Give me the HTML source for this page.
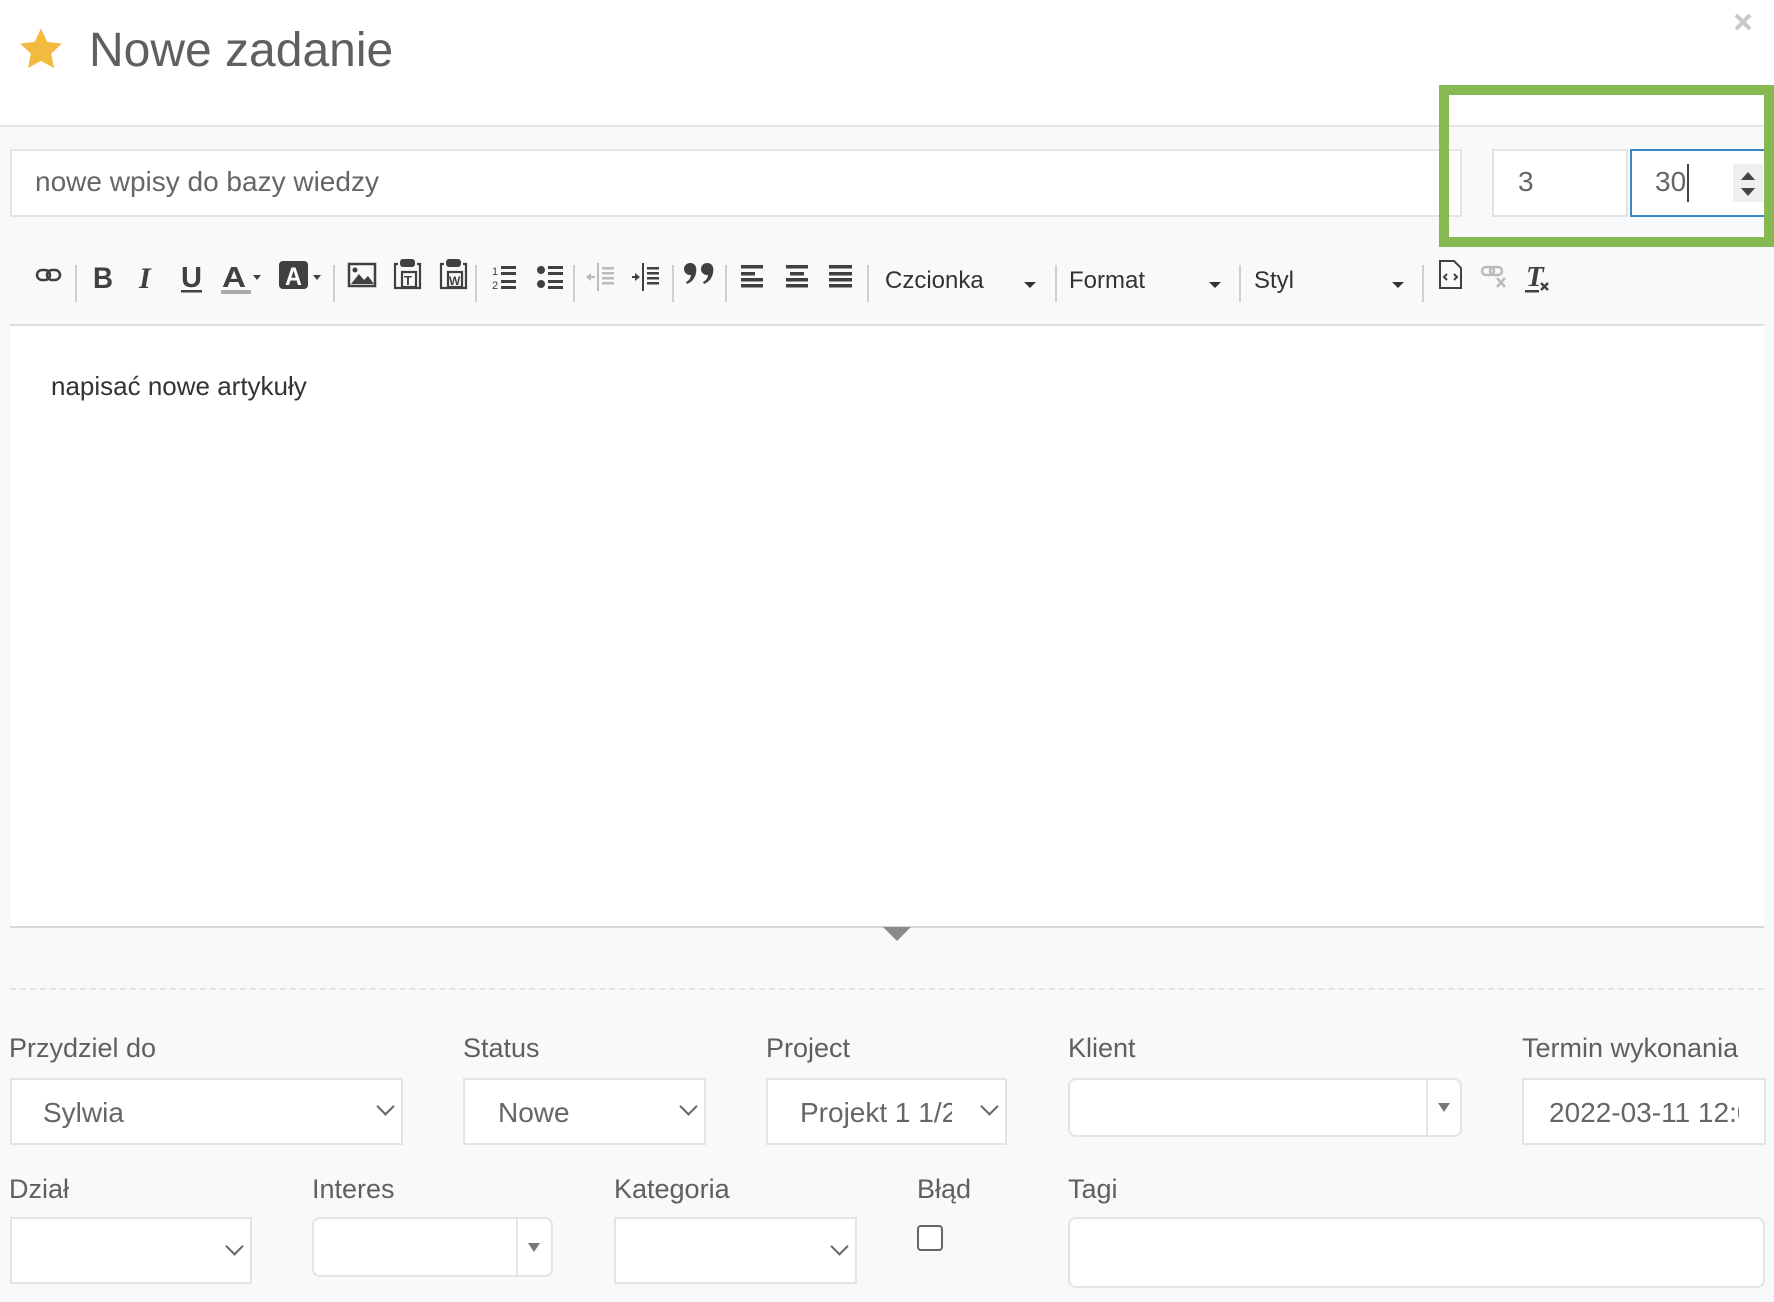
<!DOCTYPE html>
<html><head><meta charset="utf-8">
<style>
*{box-sizing:border-box;margin:0;padding:0}
body{width:1774px;height:1302px;position:relative;overflow:hidden;background:#f8f9fb;font-family:"Liberation Sans",sans-serif;color:#5f5f5f}
.a{position:absolute}
.box{position:absolute;background:#fff;border:2px solid #e3e4e6}
.lbl{position:absolute;font-size:27px;color:#5f5f5f;white-space:nowrap}
.txt{position:absolute;font-size:28px;color:#666;white-space:nowrap;overflow:hidden}
.sep{position:absolute;top:265px;width:2px;height:37px;background:#cfcfcf}
.chev{position:absolute;width:13px;height:13px;border-right:2px solid #666;border-bottom:2px solid #666;transform:rotate(45deg)}
.tb{position:absolute;font-size:24px;color:#333;white-space:nowrap}
.dd{position:absolute;width:0;height:0;border-left:6px solid transparent;border-right:6px solid transparent;border-top:6px solid #333}
</style></head><body>
<!-- header -->
<div class="a" style="left:0;top:0;width:1774px;height:127px;background:#fff;border-bottom:2px solid #e3e4e6"></div>
<svg class="a" style="left:18px;top:27px" width="46" height="44" viewBox="0 0 24 23"><path d="M12 0.8l3.3 7 7.6.9-5.6 5.2 1.5 7.6L12 17.7l-6.8 3.8 1.5-7.6L1.1 8.7l7.6-.9z" fill="#f2bb3f"/></svg>
<div class="a" style="left:89px;top:23px;font-size:48px;color:#5f5f5f;white-space:nowrap">Nowe zadanie</div>
<svg class="a" style="left:1733px;top:12px" width="20" height="20" viewBox="0 0 20 20"><path d="M3 3L17 17M17 3L3 17" stroke="#c8c8c8" stroke-width="4"/></svg>

<!-- title input -->
<div class="box" style="left:10px;top:149px;width:1452px;height:68px"></div>
<div class="txt" style="left:35px;top:166px">nowe wpisy do bazy wiedzy</div>
<div class="box" style="left:1492px;top:149px;width:136px;height:68px"></div>
<div class="txt" style="left:1518px;top:166px">3</div>
<div class="box" style="left:1630px;top:149px;width:136px;height:68px;border-color:#3b87c4"></div>
<div class="txt" style="left:1655px;top:166px">30</div>
<div class="a" style="left:1687px;top:164px;width:2px;height:38px;background:#444"></div>
<div class="a" style="left:1733px;top:164px;width:30px;height:38px;background:#efefef"></div>
<div class="a" style="left:1741px;top:172px;border-left:7px solid transparent;border-right:7px solid transparent;border-bottom:8px solid #444"></div>
<div class="a" style="left:1741px;top:188px;border-left:7px solid transparent;border-right:7px solid transparent;border-top:8px solid #444"></div>
<!-- green box -->
<div class="a" style="left:1439px;top:85px;width:335px;height:162px;border:10px solid #87b953"></div>

<!-- toolbar -->
<svg class="a" style="left:0;top:255px" width="1774" height="50" viewBox="0 0 1774 50" fill="#404040">
 <g fill="none" stroke="#404040" stroke-width="2.5"><rect x="37" y="15" width="13" height="10" rx="5"/><rect x="47" y="15" width="13" height="10" rx="5"/></g>
 <text x="93" y="33" font-size="30" font-weight="bold" font-family="Liberation Sans" textLength="20" lengthAdjust="spacingAndGlyphs">B</text>
 <text x="139" y="33" font-size="30" font-style="italic" font-weight="bold" font-family="Liberation Serif">I</text>
 <text x="181" y="32" font-size="29" font-weight="bold" font-family="Liberation Sans" textLength="21" lengthAdjust="spacingAndGlyphs">U</text>
 <rect x="181" y="35" width="21" height="2.5"/>
 <text x="222" y="32" font-size="29" font-weight="bold" font-family="Liberation Sans" textLength="24" lengthAdjust="spacingAndGlyphs">A</text>
 <rect x="221" y="35" width="30" height="4" fill="#aaa"/>
 <path d="M253 20h8l-4 5z"/>
 <rect x="279" y="6" width="29" height="28" rx="4"/>
 <text x="285" y="30" font-size="25" font-weight="bold" fill="#fff" font-family="Liberation Sans" textLength="17" lengthAdjust="spacingAndGlyphs">A</text>
 <path d="M313 20h8l-4 5z"/>
 <rect x="349" y="9" width="26" height="22" fill="none" stroke="#404040" stroke-width="2.5"/>
 <path d="M351 29l8-10 5 6 4-4 6 8z"/><circle cx="355" cy="15" r="2.5"/>
 <g fill="none" stroke="#404040" stroke-width="2.2"><path d="M398 9h-3v24h25V9h-3"/><rect x="402" y="17" width="14" height="15"/></g>
 <rect x="400" y="4" width="15" height="8" rx="3"/>
 <text x="404" y="30" font-size="13" font-weight="bold" font-family="Liberation Sans">T</text>
 <g fill="none" stroke="#404040" stroke-width="2.2"><path d="M444 9h-3v24h25V9h-3"/><rect x="448" y="17" width="14" height="15"/></g>
 <rect x="446" y="4" width="15" height="8" rx="3"/>
 <text x="449" y="30" font-size="12" font-weight="bold" font-family="Liberation Sans">W</text>
 <text x="492" y="20" font-size="11" font-family="Liberation Sans">1</text><text x="492" y="34" font-size="11" font-family="Liberation Sans">2</text>
 <rect x="501" y="11" width="15" height="3"/><rect x="501" y="17" width="15" height="3"/><rect x="501" y="25" width="15" height="3"/><rect x="501" y="31" width="15" height="3"/>
 <circle cx="541" cy="15" r="4"/><circle cx="541" cy="29" r="4"/>
 <rect x="548" y="11" width="15" height="3"/><rect x="548" y="17" width="15" height="3"/><rect x="548" y="25" width="15" height="3"/><rect x="548" y="31" width="15" height="3"/>
 <g fill="#bbb"><rect x="597" y="8" width="2" height="28"/><rect x="602" y="12" width="12" height="2.5"/><rect x="602" y="17" width="12" height="2.5"/><rect x="602" y="22" width="12" height="2.5"/><rect x="602" y="27" width="12" height="2.5"/><path d="M586 22l5-4v8z"/><rect x="590" y="21" width="5" height="2"/></g>
 <rect x="642" y="8" width="2" height="28"/><rect x="647" y="12" width="12" height="2.5"/><rect x="647" y="17" width="12" height="2.5"/><rect x="647" y="22" width="12" height="2.5"/><rect x="647" y="27" width="12" height="2.5"/><path d="M640 22l-5-4v8z"/><rect x="632" y="21" width="4" height="2"/>
 <!-- quote: two 9-shapes -->
 <circle cx="690" cy="14" r="6"/><path d="M691 8c5 1 6 5 5 10-1 5-4 9-9 11l-1-2c4-2 5-5 5-8z"/>
 <circle cx="707" cy="14" r="6"/><path d="M708 8c5 1 6 5 5 10-1 5-4 9-9 11l-1-2c4-2 5-5 5-8z"/>
 <rect x="741" y="10" width="22" height="3.5"/><rect x="741" y="17" width="14" height="3.5"/><rect x="741" y="23" width="22" height="3.5"/><rect x="741" y="29" width="22" height="3.5"/>
 <rect x="786" y="10" width="22" height="3.5"/><rect x="790" y="17" width="14" height="3.5"/><rect x="786" y="23" width="22" height="3.5"/><rect x="786" y="29" width="22" height="3.5"/>
 <rect x="829" y="10" width="23" height="3.5"/><rect x="829" y="17" width="23" height="3.5"/><rect x="829" y="23" width="23" height="3.5"/><rect x="829" y="29" width="23" height="3.5"/>
 <path d="M1440 6h14l7 7v20h-21z" fill="none" stroke="#404040" stroke-width="2"/>
 <path d="M1447 19l-3 3 3 3M1454 19l3 3-3 3" fill="none" stroke="#404040" stroke-width="2"/>
 <g fill="none" stroke="#bbb" stroke-width="2.5"><rect x="1482" y="12" width="12" height="8" rx="4"/><rect x="1490" y="12" width="12" height="8" rx="4"/><path d="M1497 23l8 9M1505 23l-8 9"/></g>
 <text x="1526" y="31" font-size="29" font-weight="bold" font-style="italic" font-family="Liberation Serif">T</text>
 <rect x="1525" y="35" width="14" height="2.5"/>
 <path d="M1541 28l7 7M1548 28l-7 7" stroke="#404040" stroke-width="2.4"/>
</svg>
<div class="sep" style="left:75px"></div>
<div class="sep" style="left:333px"></div>
<div class="sep" style="left:475px"></div>
<div class="sep" style="left:573px"></div>
<div class="sep" style="left:672px"></div>
<div class="sep" style="left:725px"></div>
<div class="sep" style="left:867px"></div>
<div class="sep" style="left:1055px"></div>
<div class="sep" style="left:1239px"></div>
<div class="sep" style="left:1422px"></div>
<div class="tb" style="left:885px;top:267px">Czcionka</div><div class="dd" style="left:1024px;top:282px"></div>
<div class="tb" style="left:1069px;top:267px">Format</div><div class="dd" style="left:1209px;top:282px"></div>
<div class="tb" style="left:1254px;top:267px">Styl</div><div class="dd" style="left:1392px;top:282px"></div>

<!-- editor -->
<div class="a" style="left:10px;top:324px;width:1754px;height:2px;background:#dedede"></div>
<div class="a" style="left:11px;top:326px;width:1753px;height:600px;background:#fff"></div>
<div class="a" style="left:10px;top:926px;width:1754px;height:2px;background:#d8d8d8"></div>
<div class="a" style="left:883px;top:927px;border-left:14px solid transparent;border-right:14px solid transparent;border-top:14px solid #8a8a8a"></div>
<div class="a" style="left:51px;top:371px;font-size:26px;color:#333;white-space:nowrap">napisać nowe artykuły</div>
<div class="a" style="left:10px;top:988px;width:1754px;border-top:2px dashed #e3e4e6"></div>

<!-- row 1 -->
<div class="lbl" style="left:9px;top:1033px">Przydziel do</div>
<div class="lbl" style="left:463px;top:1033px">Status</div>
<div class="lbl" style="left:766px;top:1033px">Project</div>
<div class="lbl" style="left:1068px;top:1033px">Klient</div>
<div class="lbl" style="left:1522px;top:1033px">Termin wykonania</div>

<div class="box" style="left:10px;top:1078px;width:393px;height:67px"></div>
<div class="txt" style="left:43px;top:1097px">Sylwia</div>
<div class="chev" style="left:379px;top:1100px"></div>
<div class="box" style="left:463px;top:1078px;width:243px;height:67px"></div>
<div class="txt" style="left:498px;top:1097px">Nowe</div>
<div class="chev" style="left:682px;top:1100px"></div>
<div class="box" style="left:766px;top:1078px;width:241px;height:67px"></div>
<div class="txt" style="left:800px;top:1097px;width:152px">Projekt 1 1/2</div>
<div class="chev" style="left:983px;top:1100px"></div>
<div class="box" style="left:1068px;top:1078px;width:394px;height:59px;border-radius:8px"></div>
<div class="a" style="left:1426px;top:1080px;width:2px;height:55px;background:#e3e4e6"></div>
<div class="a" style="left:1438px;top:1103px;border-left:6px solid transparent;border-right:6px solid transparent;border-top:9px solid #777"></div>
<div class="box" style="left:1522px;top:1078px;width:244px;height:67px"></div>
<div class="txt" style="left:1549px;top:1097px;width:190px">2022-03-11 12:00</div>

<!-- row 2 -->
<div class="lbl" style="left:9px;top:1174px">Dział</div>
<div class="lbl" style="left:312px;top:1174px">Interes</div>
<div class="lbl" style="left:614px;top:1174px">Kategoria</div>
<div class="lbl" style="left:917px;top:1174px">Błąd</div>
<div class="lbl" style="left:1068px;top:1174px">Tagi</div>

<div class="box" style="left:10px;top:1217px;width:242px;height:67px"></div>
<div class="chev" style="left:228px;top:1240px"></div>
<div class="box" style="left:312px;top:1217px;width:241px;height:60px;border-radius:8px"></div>
<div class="a" style="left:516px;top:1219px;width:2px;height:56px;background:#e3e4e6"></div>
<div class="a" style="left:528px;top:1243px;border-left:6px solid transparent;border-right:6px solid transparent;border-top:9px solid #777"></div>
<div class="box" style="left:614px;top:1217px;width:243px;height:67px"></div>
<div class="chev" style="left:833px;top:1240px"></div>
<div class="a" style="left:917px;top:1225px;width:26px;height:26px;border:2px solid #666;border-radius:4px;background:#fff"></div>
<div class="box" style="left:1068px;top:1217px;width:697px;height:71px;border-radius:8px"></div>
</body></html>
